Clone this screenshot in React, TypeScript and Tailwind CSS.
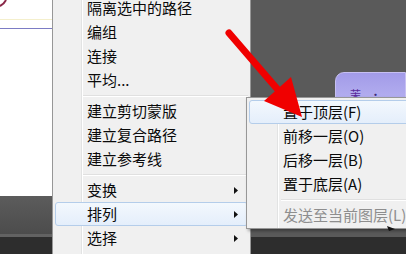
type Item = { label: string; sub?: boolean; active?: boolean; sep?: boolean; disabled?: boolean };

const mainItems: Item[] = [
  { label: "隔离选中的路径" },
  { label: "编组" },
  { label: "连接" },
  { label: "平均..." },
  { label: "", sep: true },
  { label: "建立剪切蒙版" },
  { label: "建立复合路径" },
  { label: "建立参考线" },
  { label: "", sep: true },
  { label: "变换", sub: true },
  { label: "排列", sub: true, active: true },
  { label: "选择", sub: true },
];

const subItems: Item[] = [
  { label: "置于顶层(F)", active: true },
  { label: "前移一层(O)" },
  { label: "后移一层(B)" },
  { label: "置于底层(A)" },
  { label: "", sep: true },
  { label: "发送至当前图层(L)", disabled: true },
];

function SubArrow() {
  return (
    <svg width="4" height="7" viewBox="0 0 4 7" className="shrink-0">
      <path d="M0 0 L4 3.5 L0 7 Z" fill="#111" />
    </svg>
  );
}

function MenuRow({ item, textPad, gutter }: { item: Item; textPad: string; gutter: string }) {
  if (item.sep) {
    return (
      <div className="h-[7px] flex flex-col justify-center">
        <div className={`${gutter} h-px bg-[#e0e0e0] border-b border-white box-content`} />
      </div>
    );
  }
  return (
    <div
      className={`h-[24px] mx-[2px] flex items-center justify-between rounded-[3px] border ${
        item.active
          ? "border-[#b4cdea] bg-[linear-gradient(to_bottom,#f3f8fd,#e4eefb)]"
          : "border-transparent"
      }`}
    >
      <span
        className={`${textPad} text-[15px] leading-[16px] whitespace-nowrap ${
          item.disabled ? "text-[#8e8e8e]" : "text-[#0a0a0a]"
        }`}
      >
        {item.label}
      </span>
      {item.sub && (
        <span className="pr-[9px]">
          <SubArrow />
        </span>
      )}
    </div>
  );
}

export default function App() {
  return (
    <div
      className="relative w-[406px] h-[254px] overflow-hidden flex bg-[#5a5a5a]"
      style={{ fontFamily: '"Noto Sans CJK SC", "Noto Sans", sans-serif' }}
    >
      {/* canvas on the left */}
      <div className="w-[52px] flex flex-col shrink-0">
        <div className="relative h-[196px] bg-white">
          <svg width="8" height="8" viewBox="0 0 8 8" className="absolute left-0 top-0">
            <path d="M0 6 Q4 4 6 0" stroke="#8a2848" strokeWidth="2" fill="none" />
          </svg>
          <div className="h-[19px]" />
          <div className="h-px bg-[#f4efcc]" />
          <div className="h-[8px]" />
          <div className="h-px bg-[#7c7cc4]" />
        </div>
        <div className="flex-1 bg-[linear-gradient(to_bottom,#5c5c5c,#4c4c4c)]" />
        <div className="h-[3px] bg-[#626262]" />
        <div className="h-[17px] bg-[#2d2d2d]" />
      </div>

      {/* main context menu */}
      <div className="w-[199px] shrink-0 border-l border-r border-[#979797] bg-[linear-gradient(to_right,#f0f0f0_28px,#e2e3e3_28px,#e2e3e3_29px,#ffffff_29px,#ffffff_30px,#f0f0f0_30px)]">
        <div className="-mt-[4px]">
          {mainItems.map((it, i) => (
            <MenuRow key={i} item={it} textPad="pl-[31px]" gutter="ml-[30px] mr-[2px]" />
          ))}
        </div>
      </div>

      {/* right side of the workspace */}
      <div className="flex-1 flex flex-col">
        <div className="flex-1 pt-[72px] pl-[84px]">
          <div className="h-[30px] rounded-tl-[9px] border border-[#c6bff2] bg-[linear-gradient(to_bottom,#a29be8,#b5b0f0)] flex items-end pb-[1px] pl-[14px] gap-[9px]">
            <span className="text-[11px] leading-none text-[#5a2a9a]">茉</span>
            <span className="text-[11px] leading-none text-[#3a2a7a]">·</span>
          </div>
        </div>
        <div className="h-[17px] bg-[#2d2d2d]" />
      </div>

      {/* arrange submenu */}
      <div className="absolute left-[246px] top-[97px] w-[172px] h-[132px] border border-[#979797] pt-[2px] shadow-[2px_2px_3px_rgba(0,0,0,0.35)] bg-[linear-gradient(to_right,#f0f0f0_30px,#e2e3e3_30px,#e2e3e3_31px,#ffffff_31px,#ffffff_32px,#f0f0f0_32px)]">
        {subItems.map((it, i) => (
          <MenuRow key={i} item={it} textPad="pl-[33px]" gutter="ml-[34px]" />
        ))}
      </div>

      {/* cursor tip under the submenu */}
      <svg width="8" height="5" viewBox="0 0 8 5" className="absolute left-[387px] top-[226px]">
        <path d="M0 0 L8 3 L2 5 Z" fill="#111" />
      </svg>

      {/* red annotation arrow */}
      <svg width="406" height="254" viewBox="0 0 406 254" className="absolute inset-0 pointer-events-none">
        <line x1="229" y1="33" x2="279" y2="91" stroke="#f00000" strokeWidth="7" strokeLinecap="round" />
        <polygon points="302,117 264,101 291,77" fill="#f00000" />
      </svg>
    </div>
  );
}
